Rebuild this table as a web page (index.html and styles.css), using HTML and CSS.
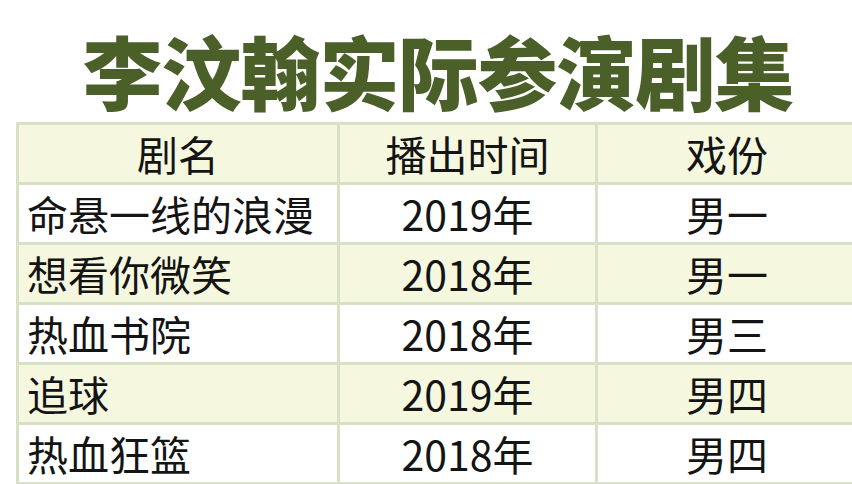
FILE: index.html
```html
<!DOCTYPE html>
<html lang="zh-CN">
<head>
<meta charset="utf-8">
<title>李汶翰实际参演剧集</title>
<link rel="stylesheet" href="styles.css">
</head>
<body>
<div class="page">
  <h1 class="title">李汶翰实际参演剧集</h1>
  <table class="shows">
    <colgroup>
      <col class="c-name">
      <col class="c-year">
      <col class="c-role">
    </colgroup>
    <thead>
      <tr class="head">
        <th>剧名</th>
        <th>播出时间</th>
        <th>戏份</th>
      </tr>
    </thead>
    <tbody>
      <tr class="odd"><td class="name">命悬一线的浪漫</td><td>2019年</td><td>男一</td></tr>
      <tr class="even"><td class="name">想看你微笑</td><td>2018年</td><td>男一</td></tr>
      <tr class="odd"><td class="name">热血书院</td><td>2018年</td><td>男三</td></tr>
      <tr class="even"><td class="name">追球</td><td>2019年</td><td>男四</td></tr>
      <tr class="odd"><td class="name">热血狂篮</td><td>2018年</td><td>男四</td></tr>
    </tbody>
  </table>
</div>
</body>
</html>
```

FILE: styles.css
```css
html, body {
  margin: 0;
  padding: 0;
  background: #ffffff;
  overflow: hidden;
}
.page {
  width: 852px;
  height: 484px;
  overflow: hidden;
  font-family: "Noto Sans CJK SC", "Noto Sans", sans-serif;
}
.title {
  margin: 0;
  height: 122px;
  box-sizing: border-box;
  padding: 25px 0 0 24px;
  font-size: 80px;
  line-height: 88px;
  font-weight: 900;
  letter-spacing: -1px;
  color: #4b5f28;
  text-align: center;
  white-space: nowrap;
}
.shows {
  margin-left: 16px;
  border-collapse: collapse;
  table-layout: fixed;
  width: 920px;
}
.c-name { width: 321px; }
.c-year { width: 258px; }
.c-role { width: 341px; }
.shows th,
.shows td {
  border: 3px solid #d8e1c6;
  height: 57px;
  padding: 0;
  font-size: 41px;
  line-height: 57px;
  font-weight: 400;
  color: #141414;
  text-align: center;
  white-space: nowrap;
  overflow: hidden;
}
.shows td.name {
  text-align: left;
  padding-left: 8px;
}
.shows th:nth-child(3),
.shows td:nth-child(3) {
  text-align: left;
  padding-left: 88px;
}
.head,
.even {
  background: #f5f8df;
}
.odd {
  background: #ffffff;
}
```
